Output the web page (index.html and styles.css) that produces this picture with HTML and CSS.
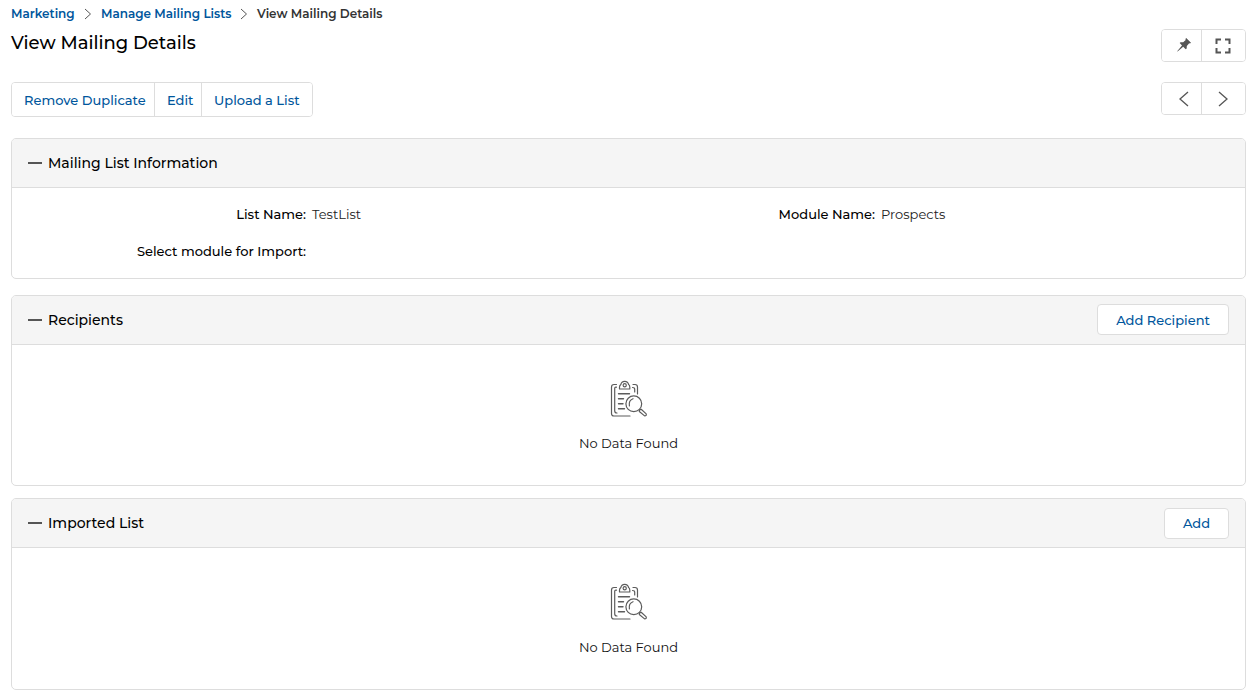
FILE: index.html
```html
<!DOCTYPE html>
<html lang="en">
<head>
<meta charset="utf-8">
<title>View Mailing Details</title>
<link rel="stylesheet" href="styles.css">
</head>
<body>
<svg class="defs" aria-hidden="true">
  <symbol id="no-data" viewBox="0 0 38 38">
    <g fill="none" stroke="#5c5c5c" stroke-width="1.2" stroke-linecap="round" stroke-linejoin="round">
      <path d="M6.500 4.500H4Q1.500 4.500 1.500 7V33.500Q1.500 36 4 36H20"/>
      <path d="M6.500 7.200H5.800Q4.700 7.200 4.700 8.300V30.700Q4.700 33 7 33"/>
      <path d="M9.500 9V7.200Q9.500 5.300 10.800 4.600Q11.400 1.300 14.700 1.300T18.600 4.600Q19.800 5.300 19.800 7.200V9Z"/>
      <circle cx="14.700" cy="5.200" r="1.600"/>
      <path d="M23 4.500H25Q27.500 4.500 27.500 7V14M22.500 7.500Q24.700 7.500 24.700 9.300V12"/>
      <path d="M8.500 13.800H19.500M8.500 18.800H13.500M8.500 23.800H13M8.500 28.800H14.500" stroke-width="1.400"/>
      <circle cx="23.800" cy="23.800" r="7.900"/>
      <path d="M23 18.700Q18.500 20.300 19.400 25.800"/>
      <path d="M29.500 29.800L31.200 29.300L36.200 33.900Q36.800 35.900 34.600 35.900L29.300 31.500Z"/>
    </g>
  </symbol>
</svg>
<main class="page">
  <nav class="breadcrumb">
    <a class="crumb crumb-root">Marketing</a>
    <svg class="crumb-sep" viewBox="0 0 8 12"><path d="M1 1L6.500 6L1 11"/></svg>
    <a class="crumb crumb-parent">Manage Mailing Lists</a>
    <svg class="crumb-sep" viewBox="0 0 8 12"><path d="M1 1L6.500 6L1 11"/></svg>
    <span class="crumb crumb-current">View Mailing Details</span>
  </nav>
  <header class="title-row">
    <h1 class="title">View Mailing Details</h1>
    <div class="icon-group">
      <button class="icon-btn icon-left" aria-label="Pin"><svg class="pin" width="14" height="14" viewBox="0 0 14 14"><path fill="#555" d="M9.200 0L14 4.700L13 5.500L12.200 5.200L9.800 8L9.700 10.600L8.700 11.200L6.200 8.700L.6 13.500L.2 13.200L5 7.500L2.700 5.100L3.500 4.200L6.200 4.200L8.700 1.900L8.400 1Z"/></svg></button>
      <button class="icon-btn icon-right" aria-label="Full screen"><svg width="16" height="16" viewBox="0 0 16 16"><path fill="none" stroke="#555" stroke-width="2" d="M1.500 6V1.500H6M10 1.500H14.500V6M14.500 10V14.500H10M6 14.500H1.500V10"/></svg></button>
    </div>
  </header>
  <div class="toolbar">
    <div class="actions">
      <button class="action action-remove">Remove Duplicate</button>
      <button class="action action-edit">Edit</button>
      <button class="action action-upload">Upload a List</button>
    </div>
    <div class="icon-group">
      <button class="icon-btn icon-left" aria-label="Previous"><svg width="10" height="16" viewBox="0 0 10 16"><path class="chevron" d="M9 1L1 8L9 15"/></svg></button>
      <button class="icon-btn icon-right" aria-label="Next"><svg width="10" height="16" viewBox="0 0 10 16"><path class="chevron" d="M1 1L9 8L1 15"/></svg></button>
    </div>
  </div>

  <section class="panel panel-info">
    <div class="panel-head"><i class="minus"></i><h2 class="heading">Mailing List Information</h2></div>
    <dl class="fields">
      <dt class="label">List Name:</dt><dd class="value">TestList</dd>
      <dt class="label">Module Name:</dt><dd class="value">Prospects</dd>
      <dt class="label">Select module for Import:</dt>
    </dl>
  </section>

  <section class="panel panel-recipients">
    <div class="panel-head"><i class="minus"></i><h2 class="heading">Recipients</h2><button class="add-btn add-recipient">Add Recipient</button></div>
    <div class="empty"><svg class="empty-icon"><use href="#no-data"/></svg><p class="empty-text">No Data Found</p></div>
  </section>

  <section class="panel panel-imported">
    <div class="panel-head"><i class="minus"></i><h2 class="heading">Imported List</h2><button class="add-btn add-list">Add</button></div>
    <div class="empty"><svg class="empty-icon"><use href="#no-data"/></svg><p class="empty-text">No Data Found</p></div>
  </section>
</main>
</body>
</html>
```
FILE: styles.css
```css
* { box-sizing: border-box; }
body { margin: 0; background: #fff; color: #000; font: 13px/18px Montserrat, Inter, sans-serif; }
h1, h2, p, dl, dd { margin: 0; }
svg { display: block; flex: none; }
button { margin: 0; padding: 0; border: 0; background: #fff; font: inherit; color: #00569c; white-space: nowrap; }
.defs { position: absolute; width: 0; height: 0; }
.page { padding: 5px 9px 0 11px; }

.breadcrumb { display: flex; align-items: center; height: 18px; font-size: 12px; font-weight: 600; white-space: nowrap; }
.crumb { color: #00569c; }
.crumb-root { width: 63px; }
.crumb-parent { width: 130px; }
.crumb-current { color: #333; }
.crumb-sep { width: 8px; height: 12px; margin: 0 9px 0 10px; fill: none; stroke: #555; }
.crumb-parent + .crumb-sep { margin: 0 9px; }

.title-row { display: flex; justify-content: space-between; height: 59px; padding-top: 6px; }
.title { font-size: 18px; line-height: 28px; font-weight: 500; }
.icon-group { display: flex; width: 85px; height: 33px; border: 1px solid #ddd; border-radius: 4px; overflow: hidden; }
.icon-btn { display: flex; align-items: center; justify-content: center; flex: 1; }
.icon-left { flex: 0 0 40px; border-right: 1px solid #ddd; padding-left: 5px; }
.icon-right { padding-right: 1px; }
.pin { margin: 0 0 2px; }
.chevron { fill: none; stroke: #555; stroke-width: 1.3; }

.toolbar { display: flex; justify-content: space-between; height: 56px; }
.actions { display: flex; width: 302px; height: 35px; border: 1px solid #ddd; border-radius: 4px; overflow: hidden; }
.action { padding-left: 12px; text-align: left; font-weight: 500; border-right: 1px solid #ddd; }
.action-remove { width: 143px; }
.action-edit { width: 47px; }
.action-upload { flex: 1; border: 0; }

.panel { border: 1px solid #ddd; border-radius: 5px; overflow: hidden; }
.panel-head { display: flex; align-items: center; height: 49px; padding: 0 16px; background: #f5f5f5; border-bottom: 1px solid #ddd; }
.panel-info { height: 141px; }
.panel-recipients { height: 191px; margin-top: 16px; }
.panel-imported { height: 192px; margin-top: 12px; }
.minus { width: 14px; height: 2px; background: #555; margin-right: 6px; }
.heading { font-size: 14px; font-weight: 500; }

.fields { display: grid; grid-template-columns: 294px 248px 309px 1fr; column-gap: 6px; row-gap: 19px; padding-top: 17px; }
.label { text-align: right; font-weight: 500; }
.value { color: #222; }

.add-btn { height: 31px; margin-left: auto; border: 1px solid #ddd; border-radius: 4px; font-weight: 500; }
.add-recipient { width: 132px; margin-bottom: 1px; }
.add-list { width: 65px; }
.empty { display: flex; flex-direction: column; align-items: center; padding-top: 35px; }
.empty-icon { width: 38px; height: 38px; }
.empty-text { margin-top: 16px; color: #111; }
.panel-imported .empty-text { margin-top: 17px; }
```
